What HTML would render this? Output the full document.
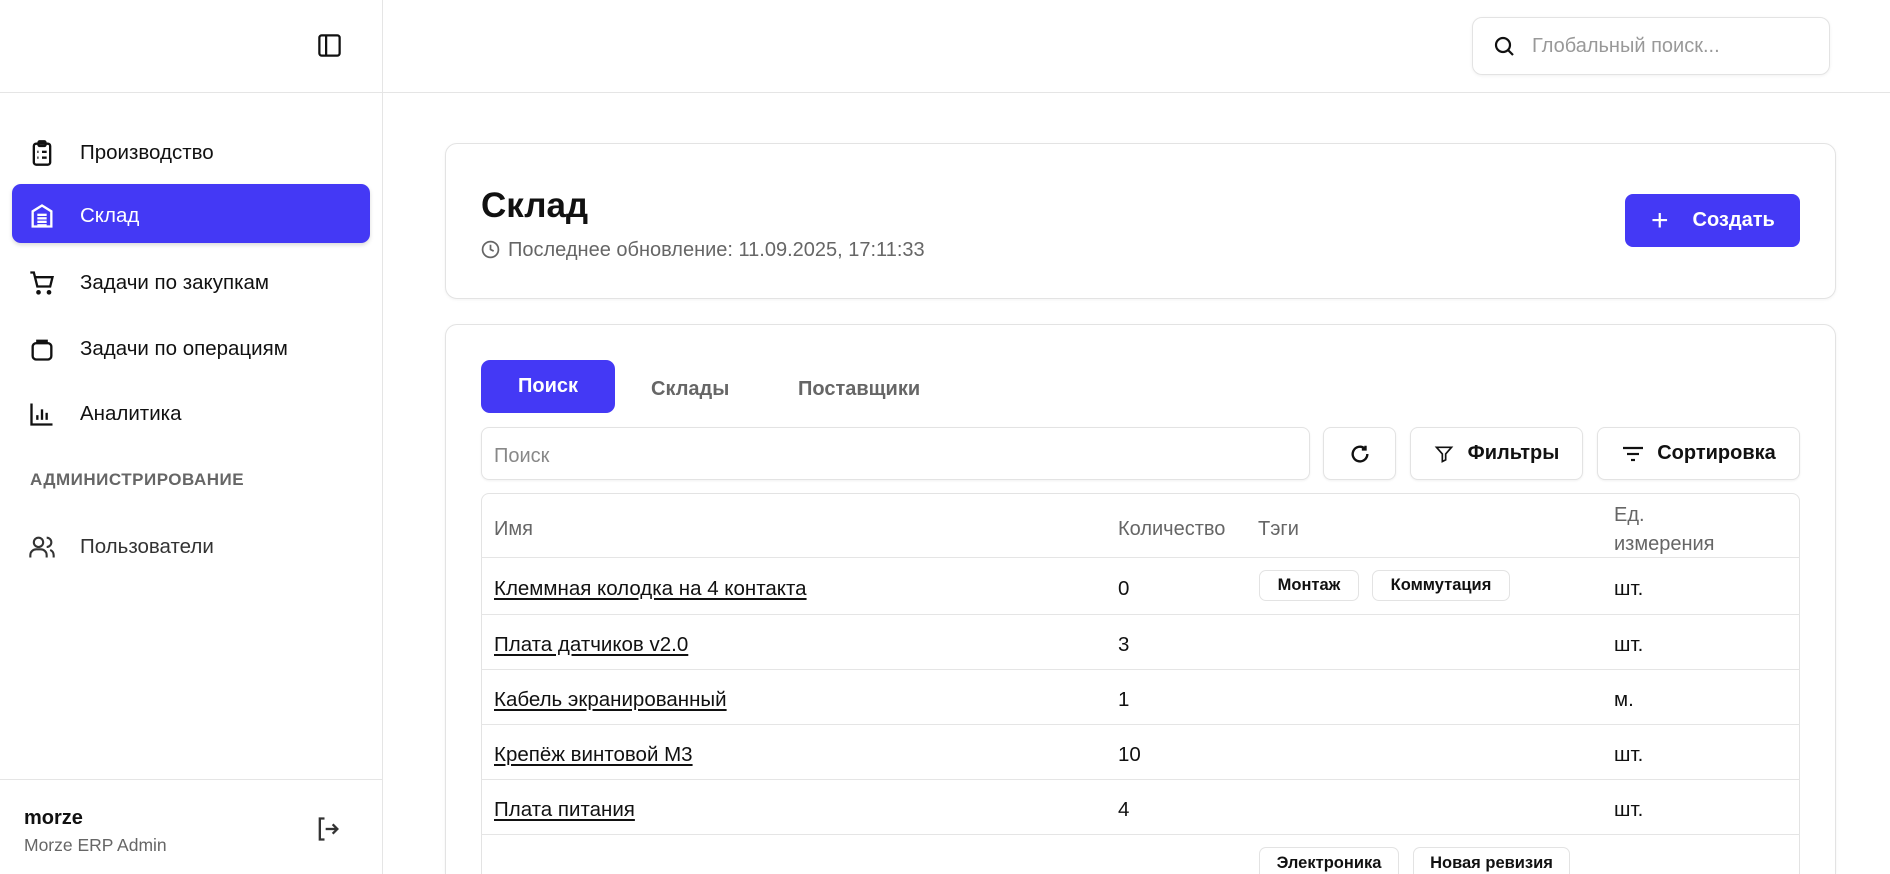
<!DOCTYPE html>
<html><head><meta charset="utf-8"><style>
*{box-sizing:border-box;margin:0;padding:0}
html,body{width:1890px;height:874px;overflow:hidden}
body{background:#fff;font-family:"Liberation Sans","Noto Sans CJK SC",sans-serif;color:#111;position:relative}
.abs{position:absolute}
.side{left:0;top:0;width:383px;height:874px;border-right:1px solid #e5e5e5}
.hline{left:0;top:92px;width:1890px;height:1px;background:#e5e5e5}
.nav{position:absolute;left:12px;width:358px;height:59px;display:flex;align-items:center;padding-left:16px;font-size:20.5px;color:#111;border-radius:9px;padding-top:4px}
.nav svg{width:28px;height:28px;margin-right:24px;flex:none}
.nav.act{background:#4439f5;color:#fff;box-shadow:0 2px 4px rgba(0,0,0,.15)}
.card{border:1px solid #e3e3e3;border-radius:12px;box-shadow:0 1px 3px rgba(0,0,0,.05);background:#fff}
.btn{position:absolute;border:1px solid #e3e3e3;border-radius:8px;display:flex;align-items:center;justify-content:center;font-size:20px;font-weight:bold;background:#fff;box-shadow:0 1px 2px rgba(0,0,0,.06)}
.th{position:absolute;font-size:20px;color:#666}
.row{position:absolute;left:481px;width:1319px;height:1px;background:#e5e5e5}
.cell{position:absolute;font-size:20.5px}
.cell.u{text-decoration:underline;text-underline-offset:3px}
.tag{position:absolute;height:31px;border:1px solid #e3e3e3;border-radius:7px;font-size:16.5px;font-weight:bold;display:flex;align-items:center;justify-content:center}
</style></head><body>
<div class="abs side"></div>
<div class="abs hline"></div>
<svg class="abs" style="left:316px;top:32px" width="27" height="27" viewBox="0 0 24 24" fill="none" stroke="#111" stroke-width="2"><rect x="3" y="3" width="18" height="18" rx="2"/><line x1="9" y1="3" x2="9" y2="21"/></svg>

<div class="abs" style="left:1472px;top:17px;width:358px;height:58px;border:1px solid #e3e3e3;border-radius:10px;box-shadow:0 1px 3px rgba(0,0,0,.06)"></div>
<svg class="abs" style="left:1492px;top:34px" width="24" height="24" viewBox="0 0 24 24" fill="none" stroke="#111" stroke-width="2.2"><circle cx="11" cy="11" r="7"/><line x1="16" y1="16" x2="21" y2="21"/></svg>
<div class="abs" style="left:1532px;top:35px;font-size:20px;color:#999">Глобальный поиск...</div>

<div class="nav" style="top:121px"><svg viewBox="0 0 24 24" fill="none" stroke="#111" stroke-width="2"><rect x="5" y="4" width="14" height="18" rx="2"/><rect x="9" y="2" width="6" height="4" rx="1"/><line x1="8" y1="11" x2="9" y2="11"/><line x1="12" y1="11" x2="16" y2="11"/><line x1="8" y1="16" x2="9" y2="16"/><line x1="12" y1="16" x2="16" y2="16"/></svg>Производство</div>
<div class="nav act" style="top:184px"><svg viewBox="0 0 24 24" fill="none" stroke="#fff" stroke-width="2"><path d="M4 21V8l8-5 8 5v13z"/><line x1="8" y1="11" x2="16" y2="11"/><line x1="8" y1="14" x2="16" y2="14"/><line x1="8" y1="17" x2="16" y2="17"/><line x1="8" y1="20" x2="16" y2="20"/></svg>Склад</div>
<div class="nav" style="top:251px"><svg viewBox="0 0 24 24" fill="none" stroke="#111" stroke-width="2"><path d="M2 3h3l3 12h11l2-8H6"/><circle cx="9" cy="20" r="1"/><circle cx="18" cy="20" r="1"/></svg>Задачи по закупкам</div>
<div class="nav" style="top:317px"><svg viewBox="0 0 24 24" fill="none" stroke="#111" stroke-width="2"><rect x="4" y="7" width="16" height="14" rx="3"/><path d="M8 7V5h8v2"/></svg>Задачи по операциям</div>
<div class="nav" style="top:382px"><svg viewBox="0 0 24 24" fill="none" stroke="#111" stroke-width="2"><path d="M3 3v18h18"/><line x1="8" y1="17" x2="8" y2="13"/><line x1="12" y1="17" x2="12" y2="8"/><line x1="16" y1="17" x2="16" y2="11"/></svg>Аналитика</div>
<div class="abs" style="left:30px;top:470px;font-size:17px;font-weight:bold;color:#666;letter-spacing:.5px">АДМИНИСТРИРОВАНИЕ</div>
<div class="nav" style="top:515px;color:#333"><svg viewBox="0 0 24 24" fill="none" stroke="#333" stroke-width="1.8"><circle cx="9" cy="8" r="4"/><path d="M2 21v-2a5 5 0 0 1 5-5h4a5 5 0 0 1 5 5v2"/><path d="M16 4a4 4 0 0 1 0 8"/><path d="M22 21v-2a5 5 0 0 0-3-4.5"/></svg>Пользователи</div>

<div class="abs" style="left:0;top:779px;width:383px;height:1px;background:#e5e5e5"></div>
<div class="abs" style="left:24px;top:807px;font-size:20px;font-weight:bold">morze</div>
<div class="abs" style="left:24px;top:835px;font-size:17.5px;color:#666">Morze ERP Admin</div>
<svg class="abs" style="left:314px;top:815px" width="28" height="28" viewBox="0 0 24 24" fill="none" stroke="#333" stroke-width="2"><path d="M9 3H5v18h4"/><path d="M10 12h10"/><path d="M16 8l4 4-4 4"/></svg>

<div class="abs card" style="left:445px;top:143px;width:1391px;height:156px"></div>
<div class="abs" style="left:481px;top:186px;font-size:35px;font-weight:bold">Склад</div>
<svg class="abs" style="left:481px;top:240px" width="19" height="19" viewBox="0 0 24 24" fill="none" stroke="#666" stroke-width="2.2"><circle cx="12" cy="12" r="10"/><path d="M12 6v6l4 2"/></svg>
<div class="abs" style="left:508px;top:239px;font-size:20px;color:#666">Последнее обновление: 11.09.2025, 17:11:33</div>
<div class="abs" style="left:1625px;top:194px;width:175px;height:53px;background:#4439f5;border-radius:8px;color:#fff;display:flex;align-items:center;font-size:20px;font-weight:bold"><span style="font-size:30px;font-weight:normal;margin:0 24px 0 26px;line-height:1">+</span>Создать</div>

<div class="abs card" style="left:445px;top:324px;width:1391px;height:550px;border-bottom:none;border-radius:12px 12px 0 0"></div>
<div class="abs" style="left:481px;top:360px;width:134px;height:53px;background:#4439f5;border-radius:9px;color:#fff;font-size:20px;font-weight:bold;display:flex;align-items:center;justify-content:center">Поиск</div>
<div class="abs" style="left:651px;top:378px;font-size:20px;font-weight:bold;color:#666">Склады</div>
<div class="abs" style="left:798px;top:378px;font-size:20px;font-weight:bold;color:#666">Поставщики</div>

<div class="abs" style="left:481px;top:427px;width:829px;height:53px;border:1px solid #e3e3e3;border-radius:8px;box-shadow:0 1px 2px rgba(0,0,0,.06)"></div>
<div class="abs" style="left:494px;top:445px;font-size:20px;color:#888">Поиск</div>
<div class="btn" style="left:1323px;top:427px;width:73px;height:53px"><svg width="22" height="22" viewBox="0 0 24 24" fill="none" stroke="#111" stroke-width="2.6"><path d="M20 12a8 8 0 1 1-3-6.2"/><path d="M18 3v4h-4"/></svg></div>
<div class="btn" style="left:1410px;top:427px;width:173px;height:53px"><svg width="20" height="20" viewBox="0 0 24 24" fill="none" stroke="#111" stroke-width="2" style="margin-right:14px"><path d="M3 4h18l-7 8v7l-4 2v-9z"/></svg>Фильтры</div>
<div class="btn" style="left:1597px;top:427px;width:203px;height:53px"><svg width="24" height="20" viewBox="0 0 24 20" fill="none" stroke="#111" stroke-width="2.2" style="margin-right:12px"><line x1="2" y1="4" x2="22" y2="4"/><line x1="6" y1="10" x2="18" y2="10"/><line x1="10" y1="16" x2="14" y2="16"/></svg>Сортировка</div>

<div class="abs" style="left:481px;top:493px;width:1319px;height:381px;border:1px solid #e3e3e3;border-bottom:none;border-radius:8px 8px 0 0"></div>
<div class="th" style="left:494px;top:518px">Имя</div>
<div class="th" style="left:1118px;top:518px">Количество</div>
<div class="th" style="left:1258px;top:518px">Тэги</div>
<div class="th" style="left:1614px;top:501px;line-height:29px">Ед.<br>измерения</div>
<div class="row" style="top:557px"></div>
<div class="row" style="top:614px"></div>
<div class="row" style="top:669px"></div>
<div class="row" style="top:724px"></div>
<div class="row" style="top:779px"></div>
<div class="row" style="top:834px"></div>

<div class="cell u" style="left:494px;top:577px">Клеммная колодка на 4 контакта</div>
<div class="cell" style="left:1118px;top:577px">0</div>
<div class="tag" style="left:1259px;top:570px;width:100px">Монтаж</div>
<div class="tag" style="left:1372px;top:570px;width:138px">Коммутация</div>
<div class="cell" style="left:1614px;top:577px">шт.</div>

<div class="cell u" style="left:494px;top:633px">Плата датчиков v2.0</div>
<div class="cell" style="left:1118px;top:633px">3</div>
<div class="cell" style="left:1614px;top:633px">шт.</div>

<div class="cell u" style="left:494px;top:688px">Кабель экранированный</div>
<div class="cell" style="left:1118px;top:688px">1</div>
<div class="cell" style="left:1614px;top:688px">м.</div>

<div class="cell u" style="left:494px;top:743px">Крепёж винтовой М3</div>
<div class="cell" style="left:1118px;top:743px">10</div>
<div class="cell" style="left:1614px;top:743px">шт.</div>

<div class="cell u" style="left:494px;top:798px">Плата питания</div>
<div class="cell" style="left:1118px;top:798px">4</div>
<div class="cell" style="left:1614px;top:798px">шт.</div>

<div class="tag" style="left:1259px;top:847px;width:140px;height:27px;border-bottom:none;border-radius:7px 7px 0 0;align-items:flex-start;padding-top:6px">Электроника</div>
<div class="tag" style="left:1413px;top:847px;width:157px;height:27px;border-bottom:none;border-radius:7px 7px 0 0;align-items:flex-start;padding-top:6px">Новая ревизия</div>
</body></html>
